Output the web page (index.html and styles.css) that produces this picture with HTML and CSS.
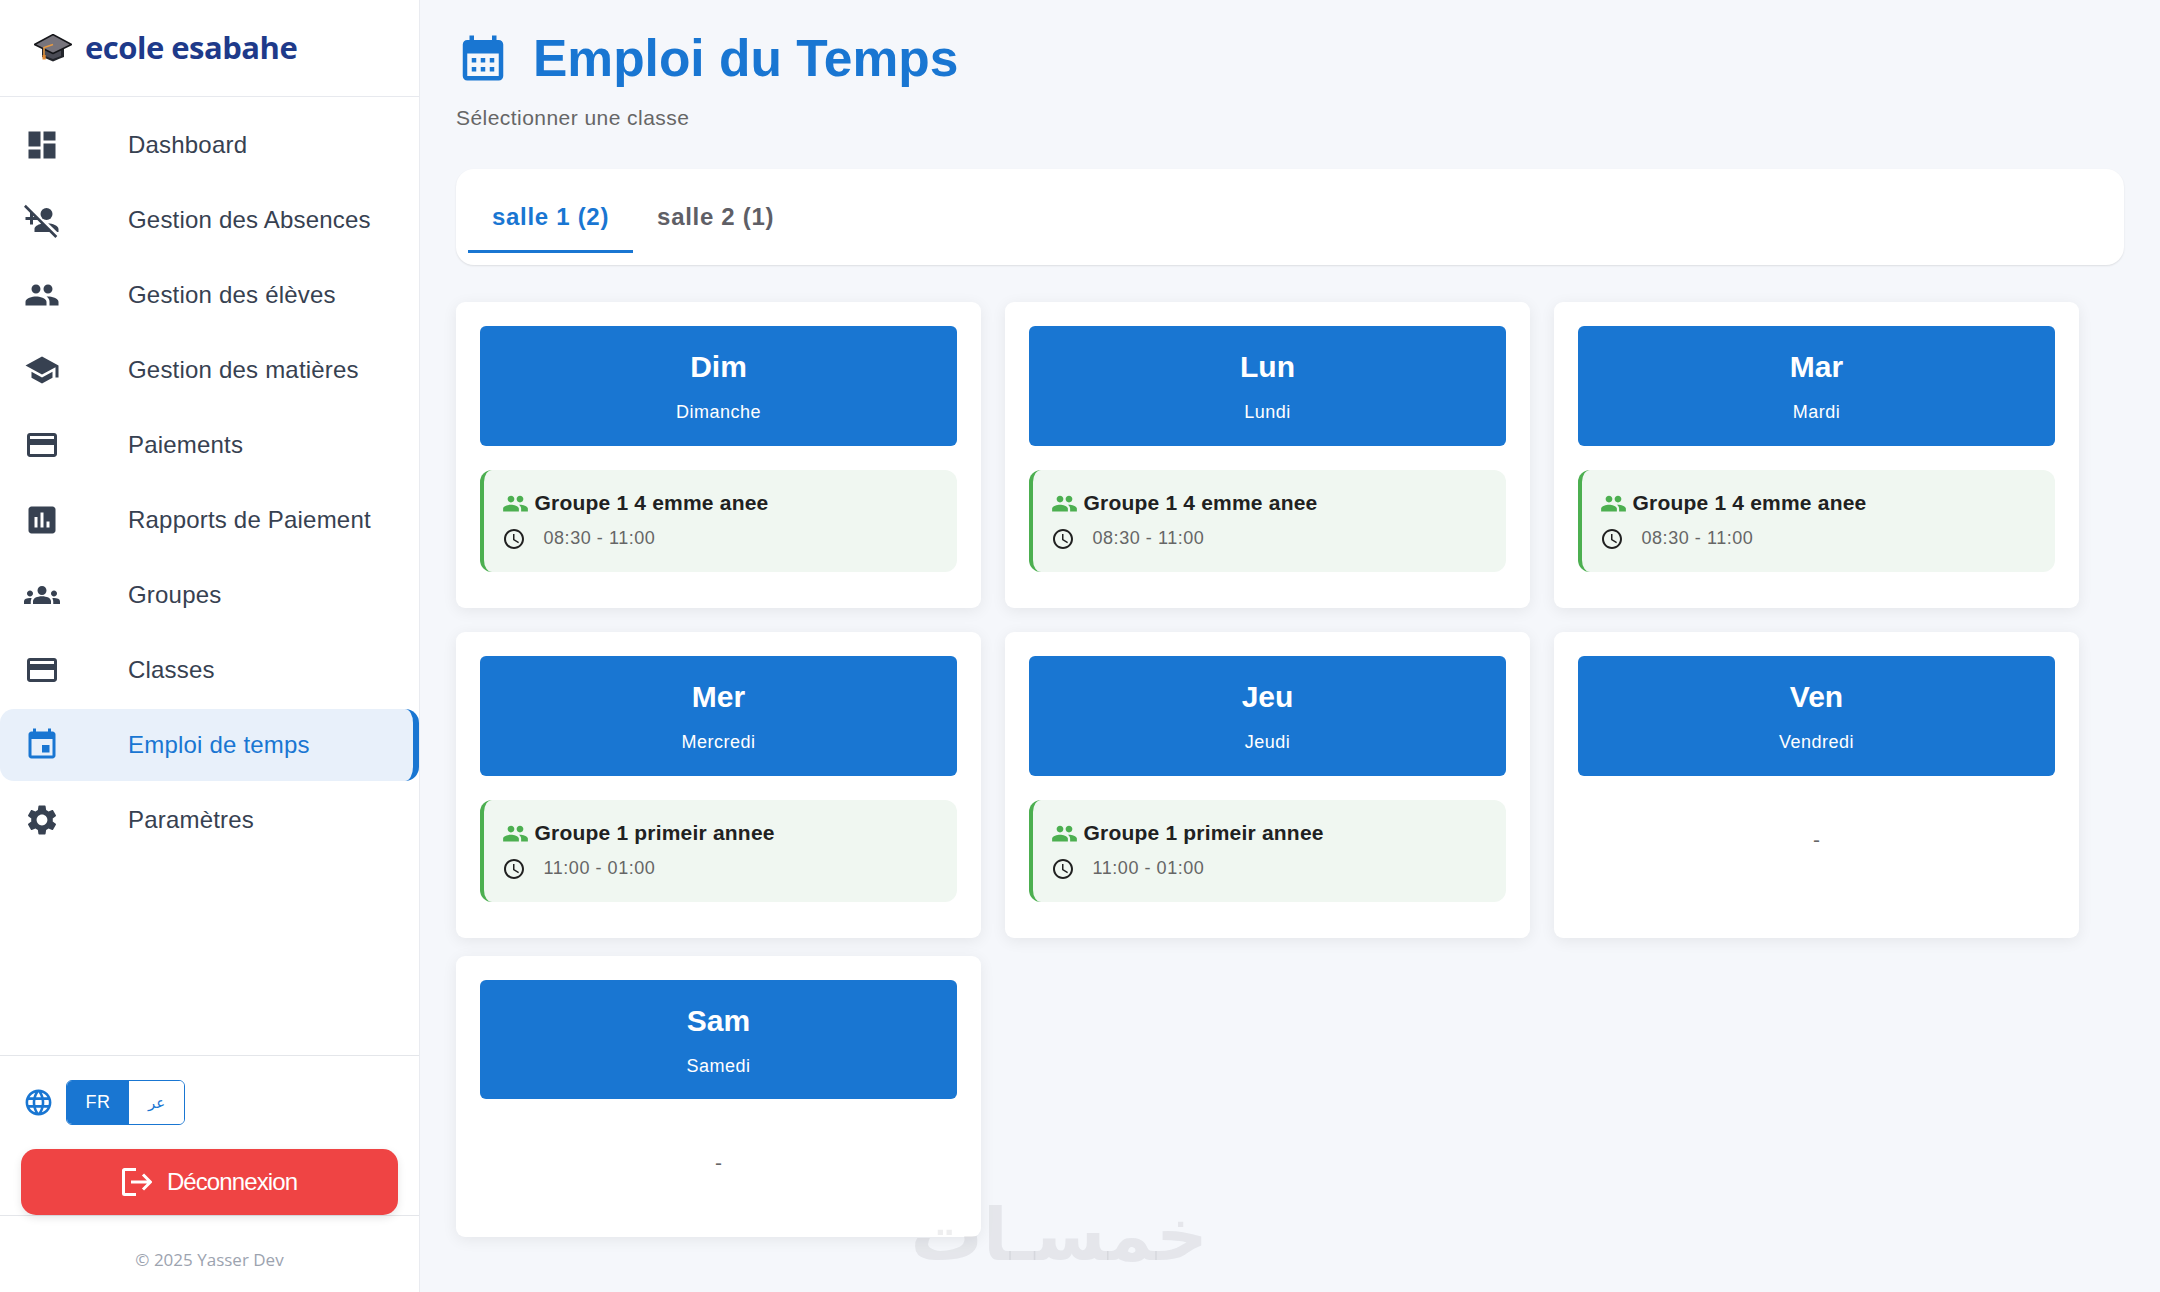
FILE: index.html
```html
<!DOCTYPE html>
<html lang="fr">
<head>
<meta charset="utf-8">
<title>Emploi du Temps</title>
<link rel="stylesheet" href="styles.css">
</head>
<body>
<svg class="sprite" xmlns="http://www.w3.org/2000/svg">
  <symbol id="i-dashboard" viewBox="0 0 24 24"><path d="M3 13h8V3H3v10zm0 8h8v-6H3v6zm10 0h8V11h-8v10zm0-18v6h8V3h-8z"/></symbol>
  <symbol id="i-absent" viewBox="0 0 24 24"><circle cx="15" cy="8" r="4"/><path d="M23 20v-2c0-2.3-4.1-3.7-6.9-3.9l6 5.9h.9zm-11.6-5.5C9.2 15.1 7 16.3 7 18v2h9.9l4 4 1.3-1.3-21-20.9L0 3.1l4 4V10H1v2h3v3h2v-3h2.9l2.5 2.5zM6 10v-.9l.9.9H6z"/></symbol>
  <symbol id="i-people" viewBox="0 0 24 24"><path d="M16 11c1.66 0 2.99-1.34 2.99-3S17.66 5 16 5c-1.66 0-3 1.34-3 3s1.34 3 3 3zm-8 0c1.66 0 2.99-1.34 2.99-3S9.66 5 8 5C6.34 5 5 6.34 5 8s1.34 3 3 3zm0 2c-2.33 0-7 1.17-7 3.5V19h14v-2.5c0-2.33-4.67-3.5-7-3.5zm8 0c-.29 0-.62.02-.97.05 1.16.84 1.97 1.97 1.97 3.45V19h6v-2.5c0-2.33-4.67-3.5-7-3.5z"/></symbol>
  <symbol id="i-school" viewBox="0 0 24 24"><path d="M5 13.18v4L12 21l7-3.82v-4L12 17l-7-3.82zM12 3 1 9l11 6 9-4.91V17h2V9L12 3z"/></symbol>
  <symbol id="i-card" viewBox="0 0 24 24"><path d="M20 4H4c-1.11 0-1.99.89-1.99 2L2 18c0 1.11.89 2 2 2h16c1.11 0 2-.89 2-2V6c0-1.11-.89-2-2-2zm0 14H4v-6h16v6zm0-10H4V6h16v2z"/></symbol>
  <symbol id="i-assess" viewBox="0 0 24 24"><path d="M19 3H5c-1.1 0-2 .9-2 2v14c0 1.1.9 2 2 2h14c1.1 0 2-.9 2-2V5c0-1.1-.9-2-2-2zM9 17H7v-7h2v7zm4 0h-2V7h2v10zm4 0h-2v-4h2v4z"/></symbol>
  <symbol id="i-groups" viewBox="0 0 24 24"><path d="M12 12.75c1.63 0 3.07.39 4.24.9 1.08.48 1.76 1.56 1.76 2.73V18H6v-1.61c0-1.18.68-2.26 1.76-2.73 1.17-.52 2.61-.91 4.24-.91zM4 13c1.1 0 2-.9 2-2s-.9-2-2-2-2 .9-2 2 .9 2 2 2zm1.13 1.1c-.37-.06-.74-.1-1.13-.1-.99 0-1.93.21-2.78.58C.48 14.9 0 15.62 0 16.43V18h4.5v-1.61c0-.83.23-1.61.63-2.29zM20 13c1.1 0 2-.9 2-2s-.9-2-2-2-2 .9-2 2 .9 2 2 2zm4 3.43c0-.81-.48-1.53-1.22-1.85-.85-.37-1.79-.58-2.78-.58-.39 0-.76.04-1.13.1.4.68.63 1.46.63 2.29V18H24v-1.57zM12 6c1.66 0 3 1.34 3 3s-1.34 3-3 3-3-1.34-3-3 1.34-3 3-3z"/></symbol>
  <symbol id="i-event" viewBox="0 0 24 24"><path d="M17 12h-5v5h5v-5zM16 1v2H8V1H6v2H5c-1.11 0-1.99.9-1.99 2L3 19c0 1.1.89 2 2 2h14c1.1 0 2-.9 2-2V5c0-1.1-.9-2-2-2h-1V1h-2zm3 18H5V8h14v11z"/></symbol>
  <symbol id="i-settings" viewBox="0 0 24 24"><path d="M19.14 12.94c.04-.3.06-.61.06-.94 0-.32-.02-.64-.07-.94l2.03-1.58c.18-.14.23-.41.12-.61l-1.92-3.32c-.12-.22-.37-.29-.59-.22l-2.39.96c-.5-.38-1.03-.7-1.62-.94l-.36-2.54c-.04-.24-.24-.41-.48-.41h-3.84c-.24 0-.43.17-.47.41l-.36 2.54c-.59.24-1.13.57-1.62.94l-2.39-.96c-.22-.08-.47 0-.59.22L2.74 8.87c-.12.21-.08.47.12.61l2.03 1.58c-.05.3-.09.63-.09.94s.02.64.07.94l-2.03 1.58c-.18.14-.23.41-.12.61l1.92 3.32c.12.22.37.29.59.22l2.39-.96c.5.38 1.03.7 1.62.94l.36 2.54c.05.24.24.41.48.41h3.84c.24 0 .44-.17.47-.41l.36-2.54c.59-.24 1.13-.56 1.62-.94l2.39.96c.22.08.47 0 .59-.22l1.92-3.32c.12-.22.07-.47-.12-.61l-2.01-1.58zM12 15.6c-1.98 0-3.6-1.62-3.6-3.6s1.62-3.6 3.6-3.6 3.6 1.62 3.6 3.6-1.62 3.6-3.6 3.6z"/></symbol>
  <symbol id="i-calendar" viewBox="0 0 24 24"><path d="M19 4h-1V2h-2v2H8V2H6v2H5c-1.11 0-1.99.9-1.99 2L3 20c0 1.1.89 2 2 2h14c1.1 0 2-.9 2-2V6c0-1.1-.9-2-2-2zm0 16H5V10h14v10zM9 14H7v-2h2v2zm4 0h-2v-2h2v2zm4 0h-2v-2h2v2zm-8 4H7v-2h2v2zm4 0h-2v-2h2v2zm4 0h-2v-2h2v2z"/></symbol>
  <symbol id="i-globe" viewBox="0 0 24 24"><path d="M11.99 2C6.47 2 2 6.48 2 12s4.47 10 9.99 10C17.52 22 22 17.52 22 12S17.52 2 11.99 2zm6.93 6h-2.95c-.32-1.25-.78-2.45-1.38-3.56 1.84.63 3.37 1.91 4.33 3.56zM12 4.04c.83 1.2 1.48 2.53 1.91 3.96h-3.82c.43-1.43 1.08-2.76 1.91-3.96zM4.26 14C4.1 13.36 4 12.69 4 12s.1-1.36.26-2h3.38c-.08.66-.14 1.32-.14 2s.06 1.34.14 2H4.26zm.82 2h2.95c.32 1.25.78 2.45 1.38 3.56-1.84-.63-3.37-1.9-4.33-3.56zm2.95-8H5.08c.96-1.66 2.49-2.93 4.33-3.56C8.81 5.55 8.35 6.75 8.03 8zM12 19.96c-.83-1.2-1.48-2.53-1.91-3.96h3.82c-.43 1.43-1.08 2.76-1.91 3.96zM14.34 14H9.66c-.09-.66-.16-1.32-.16-2s.07-1.35.16-2h4.68c.09.65.16 1.32.16 2s-.07 1.34-.16 2zm.25 5.56c.6-1.11 1.06-2.31 1.38-3.56h2.95c-.96 1.65-2.49 2.93-4.33 3.56zM16.36 14c.08-.66.14-1.32.14-2s-.06-1.34-.14-2h3.38c.16.64.26 1.31.26 2s-.1 1.36-.26 2h-3.38z"/></symbol>
  <symbol id="i-clock" viewBox="0 0 24 24"><path d="M11.99 2C6.47 2 2 6.48 2 12s4.47 10 9.99 10C17.52 22 22 17.52 22 12S17.52 2 11.99 2zM12 20c-4.42 0-8-3.58-8-8s3.58-8 8-8 8 3.58 8 8-3.58 8-8 8zm.5-13H11v6l5.25 3.15.75-1.23-4.5-2.67z"/></symbol>
</svg>

<aside class="sidebar">
  <div class="brand">
    <svg class="brand-cap" viewBox="0 0 38 28" xmlns="http://www.w3.org/2000/svg">
      <path d="M8 13v10l4 1.500 7 3 7-3 4-1.500V13z" fill="#23252b"/>
      <path d="M11 15v7l8 3 8-3v-7z" fill="#4a4b55"/>
      <path d="M19 0.500 37.500 10.500 19 19.500 0.500 10.500z" fill="#77747c" stroke="#15161a" stroke-width="1.500" stroke-linejoin="round"/>
      <path d="M19 10.500 10 13.500v8" fill="none" stroke="#e69a45" stroke-width="1.600"/>
      <path d="M8.500 21h3.200v4.500H8.500z" fill="#e08a34"/>
    </svg>
    <span class="brand-name">ecole esabahe</span>
  </div>

  <nav class="nav">
    <a class="nav-item"><svg class="nav-icon"><use href="#i-dashboard"/></svg><span>Dashboard</span></a>
    <a class="nav-item"><svg class="nav-icon"><use href="#i-absent"/></svg><span>Gestion des Absences</span></a>
    <a class="nav-item"><svg class="nav-icon"><use href="#i-people"/></svg><span>Gestion des élèves</span></a>
    <a class="nav-item"><svg class="nav-icon"><use href="#i-school"/></svg><span>Gestion des matières</span></a>
    <a class="nav-item"><svg class="nav-icon"><use href="#i-card"/></svg><span>Paiements</span></a>
    <a class="nav-item"><svg class="nav-icon"><use href="#i-assess"/></svg><span>Rapports de Paiement</span></a>
    <a class="nav-item"><svg class="nav-icon"><use href="#i-groups"/></svg><span>Groupes</span></a>
    <a class="nav-item"><svg class="nav-icon"><use href="#i-card"/></svg><span>Classes</span></a>
    <a class="nav-item nav-item-active"><svg class="nav-icon"><use href="#i-event"/></svg><span>Emploi de temps</span></a>
    <a class="nav-item"><svg class="nav-icon"><use href="#i-settings"/></svg><span>Paramètres</span></a>
  </nav>

  <div class="side-actions">
    <div class="lang-row">
      <svg class="lang-globe"><use href="#i-globe"/></svg>
      <div class="lang-toggle">
        <span class="lang-opt lang-opt-on">FR</span>
        <span class="lang-opt lang-opt-ar" lang="ar">عر</span>
      </div>
    </div>
    <button class="logout" type="button">
      <svg class="logout-icon" viewBox="0 0 30 28" xmlns="http://www.w3.org/2000/svg">
        <path d="M14 1.500H2.500a1 1 0 0 0-1 1v23a1 1 0 0 0 1 1H14M9 14h19M21 6.500l7.500 7.500-7.500 7.500" fill="none" stroke="#fff" stroke-width="3"/>
      </svg>
      <span>Déconnexion</span>
    </button>
  </div>
  <div class="side-foot">© 2025 Yasser Dev</div>
</aside>

<main class="main">
  <header class="page-head">
    <svg class="page-icon"><use href="#i-calendar"/></svg>
    <h1 class="page-title">Emploi du Temps</h1>
  </header>
  <p class="page-sub">Sélectionner une classe</p>

  <div class="tabs">
    <button class="tab tab-on" type="button">salle 1 (2)</button>
    <button class="tab" type="button">salle 2 (1)</button>
  </div>

  <section class="days">
    <article class="day">
      <div class="day-head"><div class="day-short">Dim</div><div class="day-long">Dimanche</div></div>
      <div class="session">
        <div class="session-name"><svg class="session-people"><use href="#i-people"/></svg>Groupe 1 4 emme anee</div>
        <div class="session-time"><svg class="session-clock"><use href="#i-clock"/></svg>08:30 - 11:00</div>
      </div>
    </article>
    <article class="day">
      <div class="day-head"><div class="day-short">Lun</div><div class="day-long">Lundi</div></div>
      <div class="session">
        <div class="session-name"><svg class="session-people"><use href="#i-people"/></svg>Groupe 1 4 emme anee</div>
        <div class="session-time"><svg class="session-clock"><use href="#i-clock"/></svg>08:30 - 11:00</div>
      </div>
    </article>
    <article class="day">
      <div class="day-head"><div class="day-short">Mar</div><div class="day-long">Mardi</div></div>
      <div class="session">
        <div class="session-name"><svg class="session-people"><use href="#i-people"/></svg>Groupe 1 4 emme anee</div>
        <div class="session-time"><svg class="session-clock"><use href="#i-clock"/></svg>08:30 - 11:00</div>
      </div>
    </article>
    <article class="day">
      <div class="day-head"><div class="day-short">Mer</div><div class="day-long">Mercredi</div></div>
      <div class="session">
        <div class="session-name"><svg class="session-people"><use href="#i-people"/></svg>Groupe 1 primeir annee</div>
        <div class="session-time"><svg class="session-clock"><use href="#i-clock"/></svg>11:00 - 01:00</div>
      </div>
    </article>
    <article class="day">
      <div class="day-head"><div class="day-short">Jeu</div><div class="day-long">Jeudi</div></div>
      <div class="session">
        <div class="session-name"><svg class="session-people"><use href="#i-people"/></svg>Groupe 1 primeir annee</div>
        <div class="session-time"><svg class="session-clock"><use href="#i-clock"/></svg>11:00 - 01:00</div>
      </div>
    </article>
    <article class="day">
      <div class="day-head"><div class="day-short">Ven</div><div class="day-long">Vendredi</div></div>
      <div class="day-empty">-</div>
    </article>
    <article class="day day-last">
      <div class="day-head day-head-short"><div class="day-short">Sam</div><div class="day-long">Samedi</div></div>
      <div class="day-empty">-</div>
    </article>
  </section>
</main>

<div class="watermark" lang="ar" dir="rtl">خمسـات</div>
</body>
</html>
```

FILE: styles.css
```css
* { box-sizing: border-box; }

html, body {
  margin: 0;
  height: 1292px;
  overflow: hidden;
}

body {
  display: flex;
  position: relative;
  background: #f5f7fb;
  font-family: "Liberation Sans", Arial, sans-serif;
  color: #374151;
}

.sprite { display: none; }

/* Sidebar */
.sidebar {
  width: 420px;
  height: 1292px;
  flex: none;
  display: flex;
  flex-direction: column;
  background: #fff;
  border-right: 1px solid #e9ebf0;
}

.brand {
  height: 97px;
  flex: none;
  display: flex;
  align-items: center;
  gap: 13px;
  padding: 0 0 0 34px;
  border-bottom: 1px solid #e7e9ee;
}

.brand-cap { width: 38px; height: 28px; flex: none; }

.brand-name {
  font-family: "Open Sans", sans-serif;
  font-size: 31px;
  font-weight: 700;
  color: #1e3a8a;
  line-height: 40px;
  letter-spacing: -0.5px;
  margin-top: -3px;
}

.nav {
  flex: 1;
  display: flex;
  flex-direction: column;
  gap: 3px;
  padding-top: 12px;
}

.nav-item {
  height: 72px;
  flex: none;
  display: flex;
  align-items: center;
  padding-left: 24px;
  font-size: 24px;
  letter-spacing: 0.2px;
  color: #374151;
  border-radius: 14px;
}

.nav-item-active {
  background: #e8f0fa;
  color: #1976d2;
  border-right: 6px solid #1976d2;
}

.nav-icon {
  width: 36px;
  height: 36px;
  flex: none;
  fill: currentColor;
  margin-right: 68px;
}

.side-actions {
  flex: none;
  height: 160px;
  padding: 24px 21px 0;
  border-top: 1px solid #e4e6ea;
}

.lang-row {
  display: flex;
  align-items: center;
  gap: 12px;
  height: 45px;
}

.lang-globe {
  width: 31px;
  height: 31px;
  flex: none;
  fill: #1976d2;
  margin-left: 2px;
}

.lang-toggle {
  display: flex;
  width: 119px;
  height: 45px;
  border: 1.5px solid #1976d2;
  border-radius: 6px;
  overflow: hidden;
}

.lang-opt {
  flex: 1;
  display: flex;
  align-items: center;
  justify-content: center;
  font-size: 18px;
  color: #1976d2;
  background: #fff;
}

.lang-opt-on {
  flex: none;
  width: 62px;
  background: #1976d2;
  color: #fff;
  letter-spacing: 0.5px;
}

.lang-opt-ar {
  font-family: "DejaVu Sans", sans-serif;
  font-size: 15px;
}

.logout {
  width: 377px;
  height: 66px;
  margin-top: 24px;
  display: flex;
  align-items: center;
  justify-content: center;
  gap: 15px;
  background: #ef4444;
  color: #fff;
  border: 0;
  border-radius: 15px;
  font-family: "Liberation Sans", Arial, sans-serif;
  font-size: 24px;
  letter-spacing: -0.9px;
  box-shadow: 0 3px 9px rgba(0, 0, 0, 0.1);
  position: relative;
}

.logout-icon { width: 30px; height: 28px; flex: none; }

.side-foot {
  flex: none;
  height: 77px;
  display: flex;
  align-items: center;
  justify-content: center;
  padding-top: 11px;
  font-family: "Open Sans", sans-serif;
  font-size: 17px;
  color: #9ca3af;
  border-top: 1px solid #e4e6ea;
}

/* Main */
.main {
  flex: 1;
  min-width: 0;
  padding: 24px 36px 0;
}

.page-head {
  display: flex;
  align-items: center;
  gap: 23px;
  height: 68px;
}

.page-icon {
  width: 54px;
  height: 54px;
  flex: none;
  fill: #1976d2;
}

.page-title {
  margin: 0;
  font-size: 51.5px;
  font-weight: 700;
  line-height: 68px;
  color: #1976d2;
}

.page-sub {
  margin: 11px 0 0;
  font-size: 21px;
  line-height: 30px;
  letter-spacing: 0.45px;
  color: #666;
}

.tabs {
  margin-top: 36px;
  height: 96px;
  display: flex;
  padding: 12px;
  background: #fff;
  border-radius: 18px;
  box-shadow: 0 1px 2px rgba(0, 0, 0, 0.1);
}

.tab {
  height: 72px;
  padding: 2px 24px 0;
  background: none;
  border: 0;
  border-bottom: 3px solid transparent;
  font-family: "Liberation Sans", Arial, sans-serif;
  font-size: 24px;
  font-weight: 700;
  letter-spacing: 0.7px;
  color: #5f5f66;
}

.tab-on {
  color: #1976d2;
  border-bottom-color: #1976d2;
}

.days {
  margin-top: 37px;
  display: grid;
  grid-template-columns: repeat(3, 525px);
  gap: 24px;
}

.day {
  padding: 24px;
  padding-bottom: 36px;
  background: #fff;
  border-radius: 9px;
  box-shadow: 0 3px 15px rgba(0, 0, 0, 0.07);
}

.day-last {
  margin-top: -6px;
  padding-bottom: 24px;
  height: 281px;
}

.day-head {
  height: 120px;
  padding-top: 24px;
  background: #1976d2;
  border-radius: 6px;
  color: #fff;
  text-align: center;
}

.day-head-short { height: 119px; }

.day-short {
  font-size: 30px;
  font-weight: 700;
  line-height: 34px;
}

.day-long {
  margin-top: 16px;
  font-size: 18px;
  line-height: 24px;
  letter-spacing: 0.5px;
}

.session {
  height: 102px;
  margin-top: 24px;
  padding: 18px 0 0 17.5px;
  background: #f0f7f1;
  border-left: 4.5px solid #4caf50;
  border-radius: 12px;
}

.session-name {
  display: flex;
  align-items: center;
  gap: 6px;
  height: 30px;
  font-size: 21px;
  font-weight: 700;
  letter-spacing: 0.2px;
  color: #212121;
}

.session-people {
  width: 27px;
  height: 27px;
  flex: none;
  fill: #4caf50;
}

.session-time {
  display: flex;
  align-items: center;
  gap: 18px;
  height: 28px;
  margin-top: 6px;
  font-size: 18px;
  letter-spacing: 0.55px;
  color: #666;
}

.session-clock {
  width: 24px;
  height: 24px;
  flex: none;
  fill: #212121;
  margin-top: 2px;
}

.day-empty {
  margin-top: 24px;
  padding: 25px 0 35px;
  font-size: 21px;
  line-height: 30px;
  text-align: center;
  color: #666;
}

.watermark {
  position: absolute;
  left: 950px;
  top: 1190px;
  width: 258px;
  font-family: "DejaVu Sans", sans-serif;
  font-size: 72px;
  font-weight: 700;
  line-height: 90px;
  text-align: center;
  white-space: nowrap;
  color: rgba(90, 90, 100, 0.1);
  pointer-events: none;
}
```
